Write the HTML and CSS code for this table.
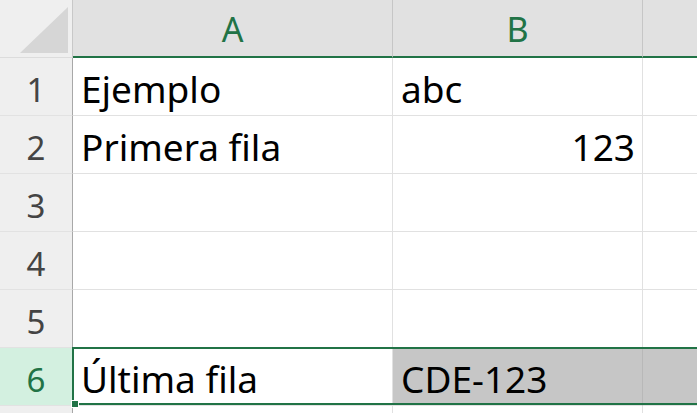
FILE: index.html
```html
<!DOCTYPE html>
<html>
<head>
<meta charset="utf-8">
<link rel="stylesheet" href="styles.css">
</head>
<body>
<div class="sheet">
  <div class="corner"><div class="tri"></div></div>
  <div class="colhead">A</div>
  <div class="colhead">B</div>
  <div class="colhead last"></div>

  <div class="rowhead">1</div>
  <div class="cell">Ejemplo</div>
  <div class="cell">abc</div>
  <div class="cell last"></div>

  <div class="rowhead">2</div>
  <div class="cell">Primera fila</div>
  <div class="cell num">123</div>
  <div class="cell last"></div>

  <div class="rowhead">3</div>
  <div class="cell"></div>
  <div class="cell"></div>
  <div class="cell last"></div>

  <div class="rowhead">4</div>
  <div class="cell"></div>
  <div class="cell"></div>
  <div class="cell last"></div>

  <div class="rowhead">5</div>
  <div class="cell"></div>
  <div class="cell"></div>
  <div class="cell last"></div>

  <div class="rowhead sel">6</div>
  <div class="cell active">Última fila</div>
  <div class="cell shade">CDE-123</div>
  <div class="cell shade last"></div>

  <div class="rowhead"></div>
  <div class="cell"></div>
  <div class="cell"></div>
  <div class="cell last"></div>

  <div class="selbox"><div class="handle"></div></div>
</div>
</body>
</html>
```
FILE: styles.css
```css
html, body {
  margin: 0;
  padding: 0;
  background: #ffffff;
  overflow: hidden;
}
.sheet {
  position: relative;
  display: grid;
  grid-template-columns: 73px 320px 250px 1fr;
  grid-template-rows: 58px repeat(7, 58px);
  width: 697px;
  height: 413px;
  overflow: hidden;
  font-family: "Noto Sans", sans-serif;
}
.corner {
  background: #efefef;
  border-bottom: 1px solid #dcdcdc;
  border-right: 1px solid #c8c8c8;
  position: relative;
}
.tri {
  position: absolute;
  right: 4px;
  bottom: 4px;
  width: 0;
  height: 0;
  border-left: 48px solid transparent;
  border-bottom: 46px solid #d6d6d6;
}
.colhead {
  background: #e1e1e1;
  border-bottom: 2px solid #217346;
  border-right: 1px solid #c6c6c6;
  color: #217346;
  font-size: 34px;
  display: flex;
  align-items: center;
  justify-content: center;
  padding-top: 2px;
  box-sizing: border-box;
}
.colhead.last {
  border-right: none;
}
.rowhead {
  background: #efefef;
  border-right: 1px solid #a8a8a8;
  border-bottom: 1px solid #e2e2e2;
  color: #444444;
  font-size: 33px;
  display: flex;
  align-items: flex-end;
  justify-content: center;
  padding-bottom: 3px;
  box-sizing: border-box;
}
.rowhead.sel {
  background: #d3f0e0;
  color: #217346;
}
.cell {
  border-right: 1px solid #e1e1e1;
  border-bottom: 1px solid #e1e1e1;
  font-size: 37px;
  color: #000000;
  display: flex;
  align-items: flex-end;
  padding: 0 7px 1px 8px;
  box-sizing: border-box;
  white-space: nowrap;
}
.cell.last {
  border-right: none;
}
.cell.num {
  justify-content: flex-end;
}
.cell.shade {
  background: #c6c6c6;
  border-right-color: #b8b8b8;
}
.selbox {
  position: absolute;
  left: 72px;
  top: 347px;
  width: 640px;
  height: 58px;
  border: 2px solid #217346;
  box-sizing: border-box;
  pointer-events: none;
}
.handle {
  position: absolute;
  left: -3px;
  bottom: -5px;
  width: 6px;
  height: 6px;
  background: #217346;
  border: 1px solid #ffffff;
}
```
